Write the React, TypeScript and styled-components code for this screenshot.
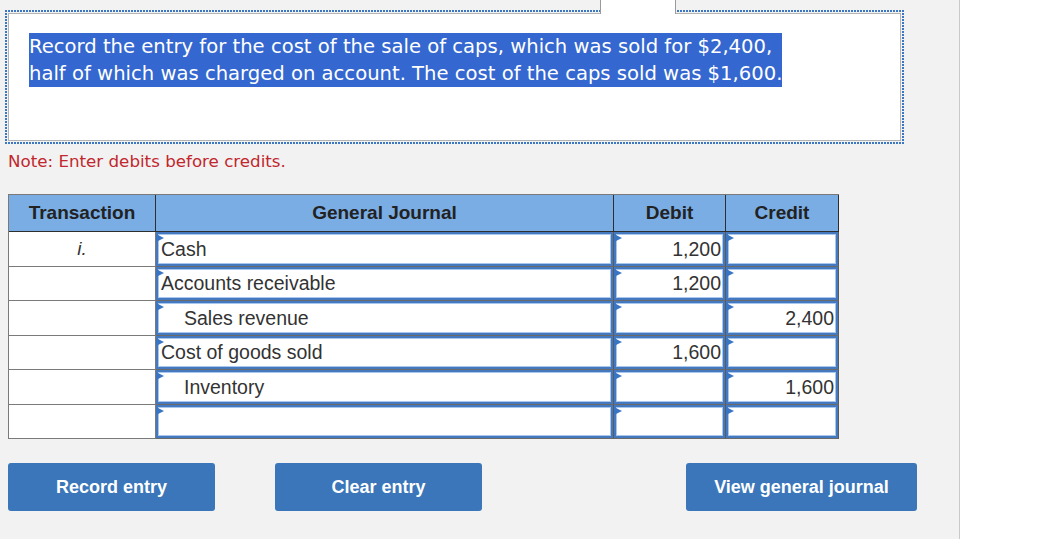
import React from "react";
import styled, { createGlobalStyle } from "styled-components";

const GlobalStyle = createGlobalStyle`
  html, body { margin: 0; padding: 0; background: #ffffff; }
  * { box-sizing: border-box; }
`;

const Page = styled.div`
  display: flex;
  width: 1044px;
  height: 539px;
  overflow: hidden;
  background: #ffffff;
`;

const Main = styled.main`
  width: 960px;
  flex: none;
  background: #f2f2f2;
  border-right: 1px solid #c9c9c9;
  padding: 10px 0 0 8px;
  display: flex;
  flex-direction: column;
`;

const Aside = styled.div`
  flex: 1;
  background: #ffffff;
`;

const dotsH = "repeating-linear-gradient(90deg, #3b77c2 0 2px, transparent 2px 3px)";
const dotsV = "repeating-linear-gradient(180deg, #3b77c2 0 2px, transparent 2px 3px)";

const QuestionFrame = styled.div`
  position: relative;
  margin-left: -3px;
  width: 899px;
  padding: 3px;
  background:
    ${dotsH} left top / 100% 2px no-repeat,
    ${dotsH} left bottom / 100% 2px no-repeat,
    ${dotsV} left top / 2px 100% no-repeat,
    ${dotsV} right top / 2px 100% no-repeat;
`;

const Tab = styled.div`
  position: absolute;
  top: -10px;
  left: 595px;
  width: 76px;
  height: 14px;
  background: #ffffff;
  border-left: 1px solid #9a9a9a;
  border-right: 1px solid #9a9a9a;
`;

const QuestionBox = styled.div`
  height: 128px;
  background: #ffffff;
  border: 1px solid #b3b3b3;
  padding: 19px 0 0 20px;
`;

const Selected = styled.span`
  display: inline-block;
  white-space: nowrap;
  background: #3467d0;
  color: #ffffff;
  font-family: "DejaVu Sans", Verdana, sans-serif;
  font-size: 19.6px;
  line-height: 27px;
`;

const Note = styled.p`
  margin: 7px 0 0 0;
  font-family: "DejaVu Sans", Verdana, sans-serif;
  font-size: 16.7px;
  line-height: 20px;
  color: #c1272d;
`;

const Journal = styled.div`
  margin-top: 23px;
  display: grid;
  width: 831px;
  grid-template-columns: 147px 458px 112px 113px;
  grid-template-rows: 37px repeat(3, 35px 34px);
  border-left: 1px solid #7a7a7a;
  border-top: 1px solid #7a7a7a;
  font-family: "Liberation Sans", Arial, sans-serif;
`;

const HeadCell = styled.div`
  background: #79ade4;
  border-right: 1px solid #2e2e2e;
  border-bottom: 1px solid #2e2e2e;
  display: flex;
  align-items: center;
  justify-content: center;
  font-weight: bold;
  font-size: 19px;
  color: #222222;
`;

const TxCell = styled.div`
  background: #ffffff;
  border-right: 1px solid #7a7a7a;
  border-bottom: 1px solid #7a7a7a;
  display: flex;
  align-items: center;
  justify-content: center;
  font-style: italic;
  font-size: 19px;
  color: #333333;
`;

const InputCell = styled.div`
  border-right: 1px solid #5a5a5a;
  border-bottom: 1px solid #6a6a6a;
  background: #ffffff;
  display: flex;
`;

const Field = styled.div<{ $align: "left" | "right"; $indent: boolean }>`
  position: relative;
  flex: 1;
  border: 2px solid #4479c0;
  box-shadow: inset 0 0 0 1px #a9c7ec;
  display: flex;
  align-items: center;
  justify-content: ${(p) => (p.$align === "right" ? "flex-end" : "flex-start")};
  padding: ${(p) => (p.$align === "right" ? "0 2px 0 0" : p.$indent ? "0 0 0 26px" : "0 0 0 3px")};
  font-size: 19.5px;
  color: #333333;
  white-space: nowrap;
`;

const Marker = styled.span`
  position: absolute;
  left: -2px;
  top: 0px;
  width: 0;
  height: 0;
  border-left: 8px solid #3a75c4;
  border-top: 4px solid transparent;
  border-bottom: 4px solid transparent;
`;

const Buttons = styled.div`
  margin-top: 24px;
  display: flex;
  gap: 60px;
`;

const ActionButton = styled.button<{ $wide?: boolean; $push?: number }>`
  width: ${(p) => (p.$wide ? "231px" : "207px")};
  height: 48px;
  margin-left: ${(p) => (p.$push ? `${p.$push}px` : "0")};
  background: #3a76b9;
  border: none;
  border-radius: 3px;
  color: #ffffff;
  font-family: "Liberation Sans", Arial, sans-serif;
  font-weight: bold;
  font-size: 18px;
  padding: 0;
  cursor: pointer;
`;

type Row = {
  tx: string;
  account: string;
  indent: boolean;
  debit: string;
  credit: string;
};

const rows: Row[] = [
  { tx: "i.", account: "Cash", indent: false, debit: "1,200", credit: "" },
  { tx: "", account: "Accounts receivable", indent: false, debit: "1,200", credit: "" },
  { tx: "", account: "Sales revenue", indent: true, debit: "", credit: "2,400" },
  { tx: "", account: "Cost of goods sold", indent: false, debit: "1,600", credit: "" },
  { tx: "", account: "Inventory", indent: true, debit: "", credit: "1,600" },
  { tx: "", account: "", indent: false, debit: "", credit: "" },
];

function EntryField({
  value,
  align,
  indent = false,
}: {
  value: string;
  align: "left" | "right";
  indent?: boolean;
}) {
  return (
    <InputCell>
      <Field $align={align} $indent={indent}>
        <Marker />
        {value}
      </Field>
    </InputCell>
  );
}

export default function App() {
  return (
    <>
      <GlobalStyle />
      <Page>
        <Main>
          <QuestionFrame>
            <Tab />
            <QuestionBox>
              <Selected>
                Record the entry for the cost of the sale of caps, which was sold for $2,400,
                <br />
                half of which was charged on account. The cost of the caps sold was $1,600.
              </Selected>
            </QuestionBox>
          </QuestionFrame>
          <Note>Note: Enter debits before credits.</Note>
          <Journal>
            <HeadCell>Transaction</HeadCell>
            <HeadCell>General Journal</HeadCell>
            <HeadCell>Debit</HeadCell>
            <HeadCell>Credit</HeadCell>
            {rows.map((r, i) => (
              <React.Fragment key={i}>
                <TxCell>{r.tx}</TxCell>
                <EntryField value={r.account} align="left" indent={r.indent} />
                <EntryField value={r.debit} align="right" />
                <EntryField value={r.credit} align="right" />
              </React.Fragment>
            ))}
          </Journal>
          <Buttons>
            <ActionButton>Record entry</ActionButton>
            <ActionButton>Clear entry</ActionButton>
            <ActionButton $wide $push={144}>
              View general journal
            </ActionButton>
          </Buttons>
        </Main>
        <Aside />
      </Page>
    </>
  );
}
